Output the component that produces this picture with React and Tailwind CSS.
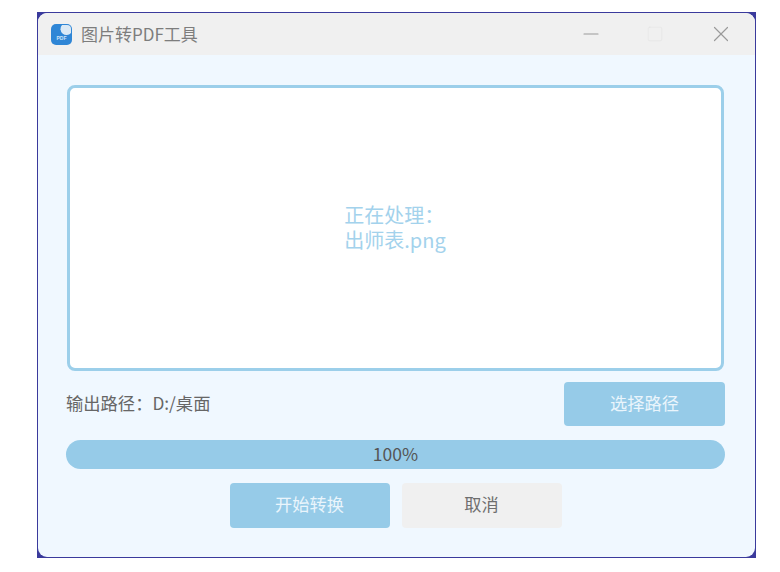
import { Minus, Square, X } from "lucide-react";

const font = { fontFamily: '"Noto Sans CJK SC", "Liberation Sans", sans-serif' };

function AppIcon() {
  return (
    <svg width="21" height="21" viewBox="0 0 21 21" className="shrink-0">
      <rect x="0" y="0" width="21" height="21" rx="5" fill="#2f86d6" />
      <path d="M11 1 A5 5 0 0 0 20 9 V5 A4 4 0 0 0 16 1 Z" fill="#dbe9f5" />
      <text x="10.5" y="16" textAnchor="middle" fontSize="5" fontWeight="700" fill="#cfe4f7" fontFamily="Liberation Sans">
        PDF
      </text>
    </svg>
  );
}

export default function App() {
  return (
    <div className="h-[572px] w-[780px] overflow-hidden bg-white pl-[37px] pt-[12px]" style={font}>
      <div className="h-[546px] w-[719px] bg-[#3a3a9c] p-px">
        <div className="flex h-full flex-col overflow-hidden rounded-[9px] bg-[#f0f8ff]">
          <div className="flex h-[42px] items-center bg-[#f0f0f0] pl-[13px]">
            <AppIcon />
            <span className="ml-[9px] mt-[-1px] text-[17px] leading-none text-[#7d7d7d]">图片转PDF工具</span>
            <div className="ml-auto flex items-center">
              <Minus size={24} strokeWidth={1.1} className="mr-[43px] text-[#9a9a9a]" />
              <Square size={18} strokeWidth={0.9} className="mr-[44px] text-[#e4e4e4]" />
              <X size={26} strokeWidth={1.1} className="mr-[21px] text-[#9a9a9a]" />
            </div>
          </div>
          <div className="flex flex-1 flex-col pl-[28px] pr-[30px] pt-[30px]">
            <div className="ml-px flex h-[286px] w-[657px] shrink-0 items-center justify-center rounded-[8px] border-[3px] border-[#9ccfea] bg-white">
              <p className="mt-[-2px] mr-[1px] text-[20px] leading-[25px] text-[#a3d2ec]">
                正在处理：
                <br />
                出师表.png
              </p>
            </div>
            <div className="mt-[11px] flex h-[44px] items-center justify-between">
              <span className="mt-[-2px] text-[17.3px] text-[#666666]">输出路径：D:/桌面</span>
              <button type="button" className="h-[44px] w-[161px] rounded-[4px] bg-[#96cbe8] pb-[3px] text-[17.2px] text-[#eaf5fc]">
                选择路径
              </button>
            </div>
            <div className="mt-[14px] flex h-[29px] items-center justify-center rounded-full bg-[#96cbe8] text-[17.5px] text-[#555555]">
              100%
            </div>
            <div className="mt-[14px] flex justify-center gap-[12px]">
              <button type="button" className="h-[45px] w-[160px] rounded-[4px] bg-[#96cbe8] pb-[3px] text-[17.2px] text-[#eaf5fc]">
                开始转换
              </button>
              <button type="button" className="h-[45px] w-[160px] rounded-[4px] bg-[#f0f0f0] pb-[3px] text-[17.2px] text-[#6e6e6e]">
                取消
              </button>
            </div>
          </div>
        </div>
      </div>
    </div>
  );
}
